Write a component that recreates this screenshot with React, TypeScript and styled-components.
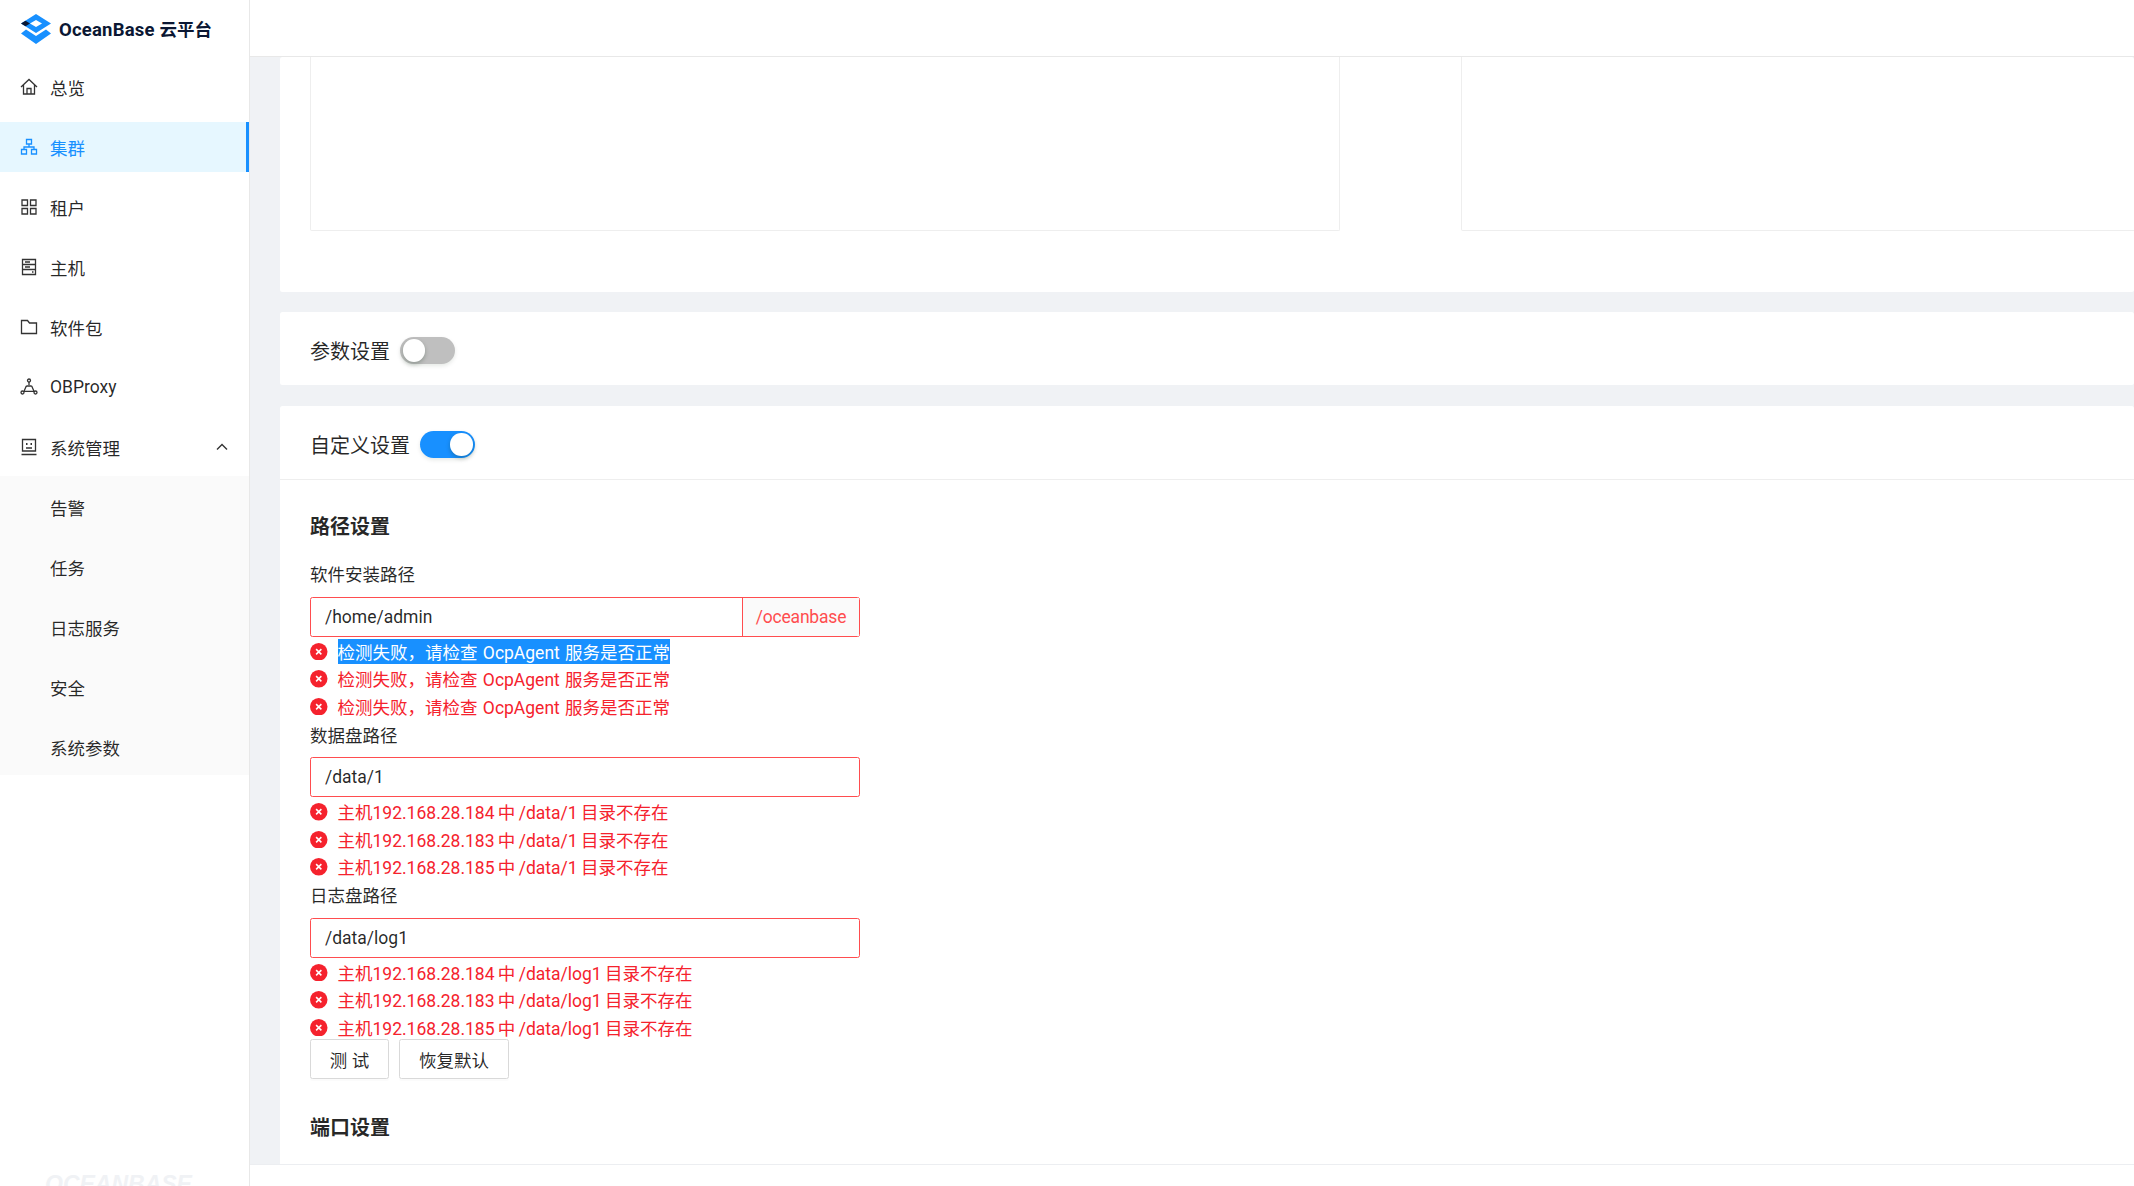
import * as React from 'react';
import styled, { createGlobalStyle } from 'styled-components';

const FONT = `Roboto, "Noto Sans CJK SC", sans-serif`;

const GlobalStyle = createGlobalStyle`
  html, body {
    margin: 0;
    padding: 0;
    height: 100%;
    overflow: hidden;
    background: #fff;
  }
  * {
    box-sizing: border-box;
  }
`;

const Layout = styled.div`
  display: grid;
  grid-template-columns: 250px 1fr;
  width: 2134px;
  height: 1186px;
  overflow: hidden;
  font-family: ${FONT};
  font-size: 17.5px;
  color: rgba(0, 0, 0, 0.85);
`;

const Sider = styled.aside`
  display: flex;
  flex-direction: column;
  border-right: 1px solid #e8e8e8;
  background: #fff;
  overflow: hidden;
`;

const Brand = styled.div`
  display: flex;
  align-items: center;
  gap: 7px;
  height: 62px;
  padding: 0 0 6px 20px;
  font-weight: 700;
  color: #0b1733;
  white-space: pre;
  svg {
    margin-top: 2px;
  }
`;

const BrandName = styled.span`
  font-size: 18.5px;
  letter-spacing: 0.2px;
`;

const BrandSuffix = styled.span`
  font-size: 17.5px;
`;

const Menu = styled.nav`
  display: flex;
  flex-direction: column;
  flex: 1;
`;

const MenuItem = styled.div<{ $active?: boolean }>`
  position: relative;
  display: flex;
  align-items: center;
  gap: 12px;
  height: 50px;
  margin-bottom: 10px;
  padding: 0 20px;
  color: ${({ $active }) => ($active ? '#1890ff' : 'rgba(0, 0, 0, 0.85)')};
  background: ${({ $active }) => ($active ? '#e6f7ff' : 'transparent')};
  border-right: ${({ $active }) => ($active ? '3px solid #1890ff' : '0')};
  svg {
    flex: none;
  }
`;

const Chevron = styled.svg`
  margin-left: auto;
`;

const SubMenu = styled.div`
  display: flex;
  flex-direction: column;
  gap: 10px;
  margin-top: -6px;
  padding: 6px 0 3px;
  background: #fafafa;
`;

const SubItem = styled.div`
  display: flex;
  align-items: center;
  height: 50px;
  padding-left: 50px;
`;

const Watermark = styled.div`
  margin-top: auto;
  height: 11px;
  padding-left: 45px;
  overflow: hidden;
  font-family: "Liberation Sans", sans-serif;
  font-style: italic;
  font-weight: 700;
  font-size: 23px;
  line-height: 18px;
  color: #f0f2f5;
`;

const Main = styled.main`
  display: flex;
  flex-direction: column;
  min-width: 0;
  height: 1186px;
  background: #f0f2f5;
`;

const Header = styled.header`
  flex: none;
  height: 57px;
  background: #fff;
  border-bottom: 1px solid #e8e8e8;
`;

const Content = styled.div`
  flex: 1;
  min-height: 0;
  overflow: hidden;
  padding-left: 30px;
  display: flex;
  flex-direction: column;
  gap: 20px;
`;

const Card = styled.section<{ $nudge?: boolean }>`
  flex: none;
  margin-top: ${({ $nudge }) => ($nudge ? '1px' : '0')};
  background: #fff;
  border-radius: 2.5px;
`;

const ChartCard = styled(Card)`
  display: flex;
  gap: 121px;
  padding: 0 0 61px 30px;
  overflow: hidden;
`;

const ChartBox = styled.div`
  flex: none;
  width: 1030px;
  height: 174px;
  border: 1px solid #eee;
  border-top: 0;
  border-radius: 0 0 2px 2px;
`;

const ToggleRow = styled.div<{ $divider?: boolean }>`
  display: flex;
  align-items: center;
  gap: 10px;
  height: ${({ $divider }) => ($divider ? '74px' : '73px')};
  padding: 4px 0 0 30px;
  font-size: 20px;
  border-bottom: ${({ $divider }) => ($divider ? '1px solid #eee' : '0')};
`;

const Switch = styled.span<{ $on?: boolean }>`
  position: relative;
  flex: none;
  width: 55px;
  height: 27.5px;
  border-radius: 14px;
  background: ${({ $on }) => ($on ? '#1890ff' : '#bfbfbf')};
  box-shadow: 0 2px 4px rgba(0, 35, 11, 0.1);
  &::after {
    content: '';
    position: absolute;
    top: 2.5px;
    left: ${({ $on }) => ($on ? '30px' : '2.5px')};
    width: 22.5px;
    height: 22.5px;
    border-radius: 50%;
    background: #fff;
    box-shadow: 0 2px 4px rgba(0, 35, 11, 0.25);
  }
`;

const FormBody = styled.div`
  padding: 33px 30px 60px;
`;

const SectionTitle = styled.h3<{ $gap?: string }>`
  margin: ${({ $gap }) => $gap || '0'} 0 21px;
  font-size: 20px;
  line-height: 28px;
  font-weight: 700;
  color: rgba(0, 0, 0, 0.85);
`;

const FieldLabel = styled.div`
  height: 27.5px;
  margin: 2.5px 0 7px;
  line-height: 27.5px;
`;

const InputBox = styled.div`
  display: flex;
  width: 550px;
  height: 40px;
  border: 1.25px solid #ff4d4f;
  border-radius: 2.5px;
  background: #fff;
`;

const InputText = styled.div`
  flex: 1;
  padding-left: 14px;
  line-height: 38px;
`;

const InputAddon = styled.div`
  flex: none;
  width: 117px;
  text-align: center;
  line-height: 38px;
  letter-spacing: -0.2px;
  color: #ff4d4f;
  background: #fafafa;
  border-left: 1.25px solid #ff4d4f;
`;

const ErrorList = styled.div`
  display: flex;
  flex-direction: column;
  padding-top: 1px;
`;

const ErrorRow = styled.div<{ $wordGap: number }>`
  display: flex;
  align-items: center;
  gap: 10px;
  height: 27.5px;
  color: #f5222d;
  white-space: nowrap;
  word-spacing: ${({ $wordGap }) => $wordGap}px;
`;

const Selected = styled.span`
  background: #1890ff;
  color: #fff;
`;

const Buttons = styled.div`
  display: flex;
  gap: 10px;
  margin-top: -2px;
`;

const Button = styled.button<{ $width: number }>`
  width: ${({ $width }) => $width}px;
  height: 40px;
  padding: 0;
  border: 1.25px solid #d9d9d9;
  border-radius: 2.5px;
  background: #fff;
  box-shadow: 0 2px 0 rgba(0, 0, 0, 0.015);
  font-family: inherit;
  font-size: 17.5px;
  color: rgba(0, 0, 0, 0.85);
`;

const Footer = styled.footer`
  flex: none;
  height: 22px;
  background: #fff;
  border-top: 1.5px solid #eceef1;
`;

const Logo = () => (
  <svg width="32" height="30" viewBox="0 0 32 30">
    <path
      fill="#1890ff"
      fillRule="evenodd"
      d="M16 0 L31 9.5 L16 19 L1 9.5 Z M16 6 L10 9.5 L16 13 L22 9.5 Z"
    />
    <path fill="#0b1733" d="M1 9.5 L5.5 6.7 L10 9.5 L5.5 12.3 Z" />
    <path fill="#1890ff" d="M6 15.5 L16 22 L26 15.5 L31 19.5 L16 30 L1 19.5 Z" />
  </svg>
);

const Line = ({ children, color = '#333' }: { children: React.ReactNode; color?: string }) => (
  <svg
    width="18"
    height="18"
    viewBox="0 0 18 18"
    fill="none"
    stroke={color}
    strokeWidth="1.3"
  >
    {children}
  </svg>
);

const icons: Record<string, (color?: string) => React.ReactNode> = {
  home: (c) => (
    <Line color={c}>
      <path d="M1 9 L9 1.5 L17 9 M3.5 7 V16 H14.5 V7 M7 16 V10.5 H11 V16" />
    </Line>
  ),
  cluster: (c) => (
    <Line color={c}>
      <path d="M6.5 1.5 H11.5 V6 H6.5 Z M1.5 11.5 H6.5 V16 H1.5 Z M11.5 11.5 H16.5 V16 H11.5 Z M9 6 V9 M4 11.5 V9 H14 V11.5" />
    </Line>
  ),
  tenant: (c) => (
    <Line color={c}>
      <path d="M2 2 H7.5 V7.5 H2 Z M10.5 2 H16 V7.5 H10.5 Z M2 10.5 H7.5 V16 H2 Z M10.5 10.5 H16 V16 H10.5 Z" />
    </Line>
  ),
  host: (c) => (
    <Line color={c}>
      <path d="M2.5 1.5 H15.5 V16.5 H2.5 Z M2.5 6.5 H15.5 M2.5 11.5 H15.5 M5 4 H10 M5 9 H10 M12 14 H13.5" />
    </Line>
  ),
  folder: (c) => (
    <Line color={c}>
      <path d="M1.5 2.5 H7.5 L9.5 5 H16.5 V15.5 H1.5 Z" />
    </Line>
  ),
  proxy: (c) => (
    <Line color={c}>
      <circle cx="9" cy="2.5" r="1.5" />
      <circle cx="2.5" cy="14.5" r="1.5" />
      <circle cx="15.5" cy="14.5" r="1.5" />
      <path d="M9 4 V7 M6.3 8 L4 13.3 H14 L11.7 8 M6.3 8 H11.7 M4 13.3 H3.5 M14 13.3 H14.5" />
    </Line>
  ),
  system: (c) => (
    <Line color={c}>
      <path d="M2.5 1.5 H15.5 V13 H2.5 Z M1.5 16.5 H16.5 M6 10 H12" />
      <path d="M6 6 H7.5 M10.5 6 H12" strokeWidth="1.8" />
    </Line>
  ),
};

const ErrorIcon = () => (
  <svg width="17.5" height="17.5" viewBox="0 0 18 18">
    <circle cx="9" cy="9" r="9" fill="#f5222d" />
    <path d="M6.3 6.3 L11.7 11.7 M11.7 6.3 L6.3 11.7" stroke="#fff" strokeWidth="1.6" />
  </svg>
);

const NAV = [
  { key: 'home', label: '总览' },
  { key: 'cluster', label: '集群', active: true },
  { key: 'tenant', label: '租户' },
  { key: 'host', label: '主机' },
  { key: 'folder', label: '软件包' },
  { key: 'proxy', label: 'OBProxy' },
];

const SUB_NAV = ['告警', '任务', '日志服务', '安全', '系统参数'];

const Errors = ({
  items,
  selectFirst,
  wordGap = 0,
}: {
  items: string[];
  selectFirst?: boolean;
  wordGap?: number;
}) => (
  <ErrorList>
    {items.map((text, i) => (
      <ErrorRow key={i} $wordGap={wordGap}>
        <ErrorIcon />
        {selectFirst && i === 0 ? <Selected>{text}</Selected> : <span>{text}</span>}
      </ErrorRow>
    ))}
  </ErrorList>
);

const hosts = ['184', '183', '185'];
const agentError = '检测失败，请检查 OcpAgent 服务是否正常';

const App: React.FC = () => {
  return (
    <Layout>
      <GlobalStyle />
      <Sider>
        <Brand>
          <Logo />
          <span>
            <BrandName>OceanBase </BrandName>
            <BrandSuffix>云平台</BrandSuffix>
          </span>
        </Brand>
        <Menu>
          {NAV.map((item) => (
            <MenuItem key={item.key} $active={item.active}>
              {icons[item.key](item.active ? '#1890ff' : '#333')}
              {item.label}
            </MenuItem>
          ))}
          <MenuItem>
            {icons.system('#333')}
            系统管理
            <Chevron width="14" height="14" viewBox="0 0 14 14" fill="none" stroke="#333" strokeWidth="1.4">
              <path d="M2 9.5 L7 4.5 L12 9.5" />
            </Chevron>
          </MenuItem>
          <SubMenu>
            {SUB_NAV.map((label) => (
              <SubItem key={label}>{label}</SubItem>
            ))}
          </SubMenu>
          <Watermark>OCEANBASE</Watermark>
        </Menu>
      </Sider>
      <Main>
        <Header />
        <Content>
          <ChartCard>
            <ChartBox />
            <ChartBox />
          </ChartCard>
          <Card>
            <ToggleRow>
              参数设置
              <Switch />
            </ToggleRow>
          </Card>
          <Card $nudge>
            <ToggleRow $divider>
              自定义设置
              <Switch $on />
            </ToggleRow>
            <FormBody>
              <SectionTitle>路径设置</SectionTitle>
              <FieldLabel>软件安装路径</FieldLabel>
              <InputBox>
                <InputText>/home/admin</InputText>
                <InputAddon>/oceanbase</InputAddon>
              </InputBox>
              <Errors items={[agentError, agentError, agentError]} selectFirst wordGap={1} />
              <FieldLabel>数据盘路径</FieldLabel>
              <InputBox>
                <InputText>/data/1</InputText>
              </InputBox>
              <Errors items={hosts.map((h) => `主机192.168.28.${h} 中 /data/1 目录不存在`)} wordGap={-1} />
              <FieldLabel>日志盘路径</FieldLabel>
              <InputBox>
                <InputText>/data/log1</InputText>
              </InputBox>
              <Errors items={hosts.map((h) => `主机192.168.28.${h} 中 /data/log1 目录不存在`)} wordGap={-1} />
              <Buttons>
                <Button $width={79}>测 试</Button>
                <Button $width={110}>恢复默认</Button>
              </Buttons>
              <SectionTitle $gap="35px">端口设置</SectionTitle>
            </FormBody>
          </Card>
        </Content>
        <Footer />
      </Main>
    </Layout>
  );
};

export default App;
